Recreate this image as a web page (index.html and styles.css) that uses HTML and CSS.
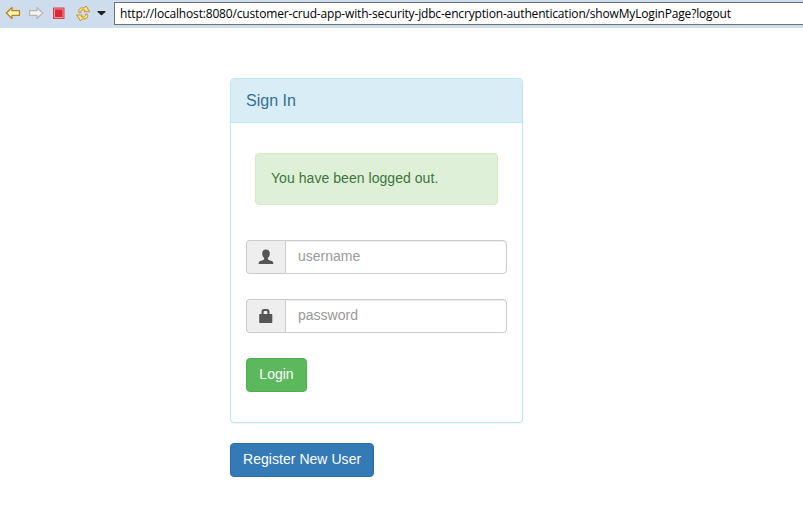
FILE: index.html
```
<!DOCTYPE html>
<html lang="en">
<head>
<meta charset="utf-8">
<title>Login Page</title>
<link rel="stylesheet" href="styles.css">
</head>
<body>
<header class="toolbar">
  <svg class="tools" width="114" height="28" viewBox="0 0 114 28" aria-hidden="true">
    <path d="M6.300 13 12 7.500v3.200h7.500v4.600H12v3.200z" fill="#fff3c0" stroke="#b88213" stroke-width="1.200" stroke-linejoin="round"/>
    <path d="M42.700 13 37 7.500v3.200h-7.500v4.600H37v3.200z" fill="#f4f4f4" stroke="#b5b5b5" stroke-width="1.200" stroke-linejoin="round"/>
    <rect x="53.500" y="8" width="10.500" height="10.500" fill="#ee8f96" stroke="#cf4753"/>
    <rect x="55" y="9.500" width="7.500" height="7.500" fill="#df2634"/>
    <g fill="#fbe18b" stroke="#c18a20" stroke-width=".9" stroke-linejoin="round">
      <path id="arrow" d="M79 12.500C77.800 9.300 80.200 7.200 84 8L86 6 89.800 11.800H84.500L85 10C82.500 9.200 80.800 10.200 80.800 12.500z"/>
      <use href="#arrow" transform="rotate(180 83.200 13.400)"/>
    </g>
    <path d="M97.500 11h8v1l-4 3.500-4-3.500z" fill="#222"/>
  </svg>
  <div class="address"><span class="url">http://localhost:8080/customer-crud-app-with-security-jdbc-encryption-authentication/showMyLoginPage?logout</span></div>
</header>
<main class="login-box">
  <section class="panel">
    <div class="panel-heading">Sign In</div>
    <form class="panel-body">
      <div class="alert">You have been logged out.</div>
      <div class="input-group">
        <span class="addon"><svg width="16" height="16" viewBox="0 0 16 16"><path d="M8 .6c2.400 0 3.800 1.500 3.800 4 0 2-.8 3.500-1.900 4.400v1.200c.3.700 1.600 1 3.200 1.600 1.600.6 2.300 1.300 2.300 3.200H.6c0-1.900.7-2.600 2.300-3.200 1.600-.6 2.900-.9 3.200-1.600V9C5 8.100 4.200 6.600 4.200 4.600c0-2.500 1.400-4 3.800-4z"/></svg></span>
        <input type="text" class="field" placeholder="username">
      </div>
      <div class="input-group">
        <span class="addon"><svg width="16" height="16" viewBox="0 0 16 16"><path fill-rule="evenodd" d="M3.500 6V3.500Q3.500 1 6 1h3q2.500 0 2.500 2.500V6h2q.8 0 .8.800V14.200q0 .8-.8.800H2q-.8 0-.8-.8V6.800Q1.200 6 2 6zM5.600 6h3.800V4Q9.400 3 8.500 3h-2Q5.600 3 5.600 4z"/></svg></span>
        <input type="password" class="field" placeholder="password">
      </div>
      <button type="button" class="btn btn-success">Login</button>
    </form>
  </section>
  <a class="btn btn-primary">Register New User</a>
</main>
</body>
</html>
```
FILE: styles.css
```
* { box-sizing: border-box; }
body {
  margin: 0;
  background: #fff;
  color: #333;
  font: 14px/20px "Liberation Sans", Arial, sans-serif;
  overflow: hidden;
}
.toolbar {
  display: flex;
  height: 28px;
  background: #cedded;
}
.tools { flex: none; }
.address {
  flex: 1;
  height: 23px;
  margin-top: 2px;
  padding-left: 5px;
  border: 1px solid #707070;
  border-right: 0;
  background: #fff;
  color: #000;
  font: 12px/21px "Open Sans", "Noto Sans", sans-serif;
  white-space: nowrap;
}
.url { letter-spacing: -0.17px; }
.login-box { width: 293px; margin: 50px 0 0 230px; }
.panel {
  height: 345px;
  margin-bottom: 20px;
  border: 1px solid #bce8f1;
  border-radius: 4px;
  background: #fff;
  box-shadow: 0 1px 1px rgba(0, 0, 0, .05);
}
.panel-heading {
  height: 44px;
  padding: 12px 15px;
  border-bottom: 1px solid #bce8f1;
  border-radius: 3px 3px 0 0;
  background: #d9edf7;
  color: #31708f;
  font-size: 16px;
  line-height: 19px;
}
.panel-body { padding: 30px 15px; }
.alert {
  height: 52px;
  margin: 0 9px 35px;
  padding: 14px 15px 16px;
  border: 1px solid #d6e9c6;
  border-radius: 4px;
  background: #dff0d8;
  color: #3c763d;
  letter-spacing: 0.05px;
}
.input-group { display: flex; height: 34px; margin-bottom: 25px; }
.addon {
  display: flex;
  flex: none;
  align-items: center;
  justify-content: center;
  width: 39px;
  border: 1px solid #ccc;
  border-right: 0;
  border-radius: 4px 0 0 4px;
  background: #eee;
  fill: #555;
}
.field {
  flex: 1;
  min-width: 0;
  padding: 5px 12px 7px;
  border: 1px solid #ccc;
  border-radius: 0 4px 4px 0;
  box-shadow: inset 0 1px 1px rgba(0, 0, 0, .075);
  font: inherit;
}
.field::placeholder { color: #999; opacity: 1; }
.btn {
  display: inline-block;
  height: 34px;
  padding: 5px 12px 7px;
  border: 1px solid;
  border-radius: 4px;
  color: #fff;
  font: inherit;
  white-space: nowrap;
}
.btn-success { width: 61px; background: #5cb85c; border-color: #4cae4c; }
.btn-primary { width: 144px; background: #337ab7; border-color: #2e6da4; letter-spacing: 0.04px; }
```
